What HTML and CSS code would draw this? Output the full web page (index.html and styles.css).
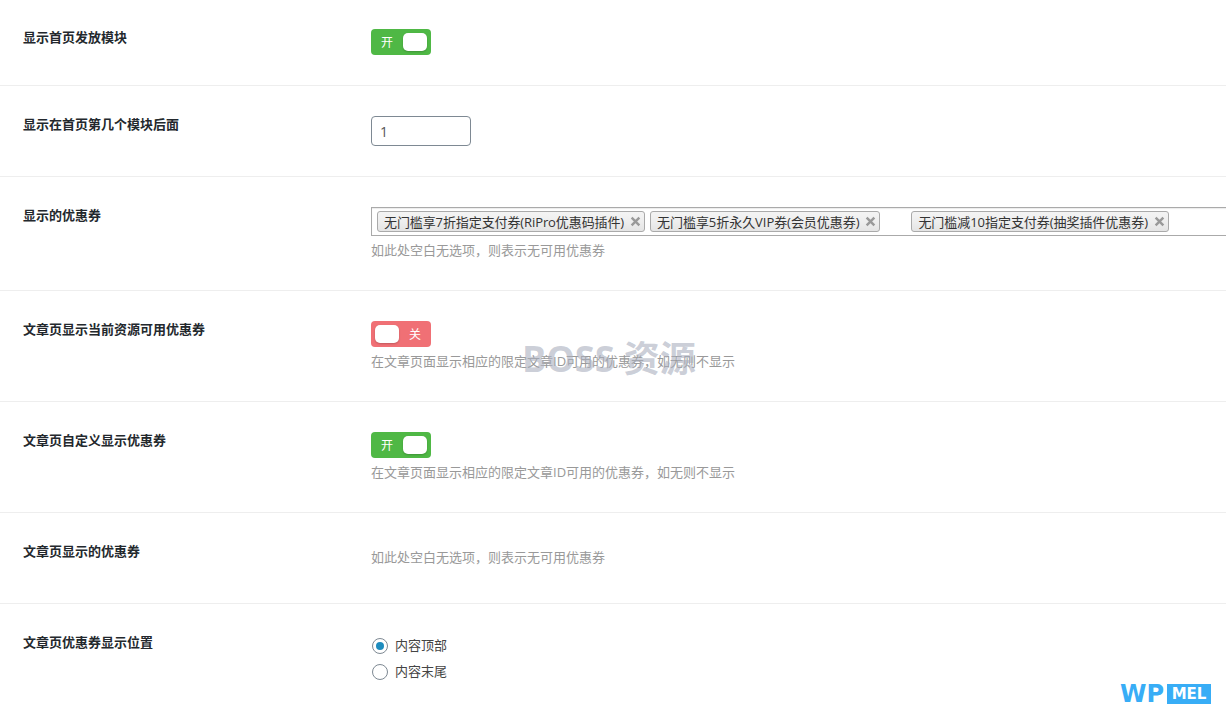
FILE: index.html
```html
<!DOCTYPE html>
<html lang="zh-CN">
<head>
<meta charset="utf-8">
<title>优惠券设置</title>
<link rel="stylesheet" href="styles.css">
</head>
<body>
<main class="form">
  <section class="row row-first">
    <div class="label">显示首页发放模块</div>
    <div class="field">
      <div class="switch on"><span class="switch-text">开</span><span class="knob"></span></div>
    </div>
  </section>
  <section class="row">
    <div class="label">显示在首页第几个模块后面</div>
    <div class="field"><input class="num" type="text" value="1"></div>
  </section>
  <section class="row">
    <div class="label">显示的优惠券</div>
    <div class="field">
      <div class="select">
        <span class="chip chip-tight">无门槛享7折指定支付券(RiPro优惠码插件)<svg class="x" viewBox="0 0 10 10"><path d="M1.5 1.5l7 7M8.5 1.5l-7 7"/></svg></span>
        <span class="chip">无门槛享5折永久VIP券(会员优惠券)<svg class="x" viewBox="0 0 10 10"><path d="M1.5 1.5l7 7M8.5 1.5l-7 7"/></svg></span>
        <span class="chip chip-far">无门槛减10指定支付券(抽奖插件优惠券)<svg class="x" viewBox="0 0 10 10"><path d="M1.5 1.5l7 7M8.5 1.5l-7 7"/></svg></span>
      </div>
      <p class="hint">如此处空白无选项，则表示无可用优惠券</p>
    </div>
  </section>
  <section class="row">
    <div class="label">文章页显示当前资源可用优惠券</div>
    <div class="field">
      <div class="switch off"><span class="knob"></span><span class="switch-text">关</span></div>
      <p class="hint">在文章页面显示相应的限定文章ID可用的优惠券，如无则不显示</p>
    </div>
  </section>
  <section class="row">
    <div class="label">文章页自定义显示优惠券</div>
    <div class="field">
      <div class="switch on"><span class="switch-text">开</span><span class="knob"></span></div>
      <p class="hint">在文章页面显示相应的限定文章ID可用的优惠券，如无则不显示</p>
    </div>
  </section>
  <section class="row">
    <div class="label">文章页显示的优惠券</div>
    <div class="field"><p class="hint hint-only">如此处空白无选项，则表示无可用优惠券</p></div>
  </section>
  <section class="row row-last">
    <div class="label">文章页优惠券显示位置</div>
    <div class="field radios">
      <label class="radio"><span class="dot checked"></span>内容顶部</label>
      <label class="radio"><span class="dot"></span>内容末尾</label>
    </div>
  </section>
</main>
<div class="watermark">BOSS 资源</div>
<div class="logo"><span class="logo-wp">WP</span><span class="logo-mel">MEL</span></div>
</body>
</html>
```
FILE: styles.css
```css
* { box-sizing: border-box; }
html, body { margin: 0; height: 717px; overflow: hidden; background: #fff; }
body {
  font-family: "Open Sans", "Noto Sans CJK SC", sans-serif;
  font-size: 13px;
  color: #444;
  position: relative;
}
.form { display: flex; flex-direction: column; }
.row {
  display: flex;
  padding: 30px 0;
  border-bottom: 1px solid #eee;
}
.row-first { padding-top: 29px; }
.row-last { border-bottom: 0; }
.label {
  width: 371px;
  flex: none;
  padding-left: 23px;
  font-size: 13px;
  font-weight: 700;
  line-height: 16px;
  color: #23282d;
}
.field { flex: 1; min-width: 0; display: flex; flex-direction: column; align-items: flex-start; }
.switch {
  width: 60px;
  height: 26px;
  border-radius: 4px;
  display: flex;
  align-items: center;
  justify-content: space-between;
  padding: 0 4px;
  color: #fff;
  font-size: 12px;
}
.on { background: #4fb845; padding-left: 10px; }
.off { background: #f07075; padding-right: 10px; }
.knob {
  width: 24px;
  height: 18px;
  border-radius: 5px;
  background: #fff;
  box-shadow: 0 1px 2px rgba(0,0,0,.2);
}
.num {
  width: 100px;
  height: 30px;
  border: 1px solid #7e8993;
  border-radius: 4px;
  padding: 0 8px;
  font: 14px "Open Sans", sans-serif;
  color: #555;
  background: #fff;
  outline: 0;
}
.select {
  width: 900px;
  height: 29px;
  border: 1px solid #aaa;
  display: flex;
  align-items: center;
  gap: 5px;
  padding-left: 5px;
  background: #fff;
  box-shadow: inset 0 1px 1px rgba(0,0,0,.08);
}
.chip {
  height: 21px;
  display: flex;
  align-items: center;
  padding: 0 3px 0 6px;
  border: 1px solid #aaa;
  border-radius: 3px;
  background: linear-gradient(#f4f4f4, #eee 50%, #e4e4e4);
  color: #333;
  font-size: 13px;
  letter-spacing: -.05px;
  white-space: nowrap;
}
.chip-tight { letter-spacing: -.1px; }
.chip-far { margin-left: 26px; }
.x { width: 11px; height: 11px; margin-left: 6px; fill: none; stroke: #999; stroke-width: 2.2; }
.hint { margin: 5px 0 1px; color: #999; font-size: 13px; line-height: 18px; }
.hint-only { margin-bottom: 7px; }
.radios { gap: 8px; padding-top: 2px; }
.radio { display: flex; align-items: center; gap: 7px; height: 18px; color: #444; font-size: 13px; line-height: 18px; margin-left: 1px; }
.dot {
  width: 16px;
  height: 16px;
  margin-top: 2px;
  border: 1px solid #7e8993;
  border-radius: 50%;
  display: flex;
  align-items: center;
  justify-content: center;
  background: #fff;
}
.checked::after {
  content: "";
  width: 8px;
  height: 8px;
  border-radius: 50%;
  background: #1e8cbe;
}
.watermark {
  position: absolute;
  left: 522px;
  top: 335px;
  font: 700 36px/48px "Open Sans", "Noto Sans CJK SC", sans-serif;
  color: rgba(170,175,190,.62);
  white-space: nowrap;
  pointer-events: none;
}
.logo {
  position: absolute;
  left: 1120px;
  top: 684px;
  display: flex;
  align-items: center;
  gap: 3px;
  color: #38adf6;
}
.logo-wp { font: 700 24px/20px "DejaVu Sans", sans-serif; }
.logo-mel {
  width: 44px;
  height: 20px;
  background: #38adf6;
  color: #fff;
  font: 700 15px/20px "DejaVu Sans", sans-serif;
  text-align: center;
}
```
